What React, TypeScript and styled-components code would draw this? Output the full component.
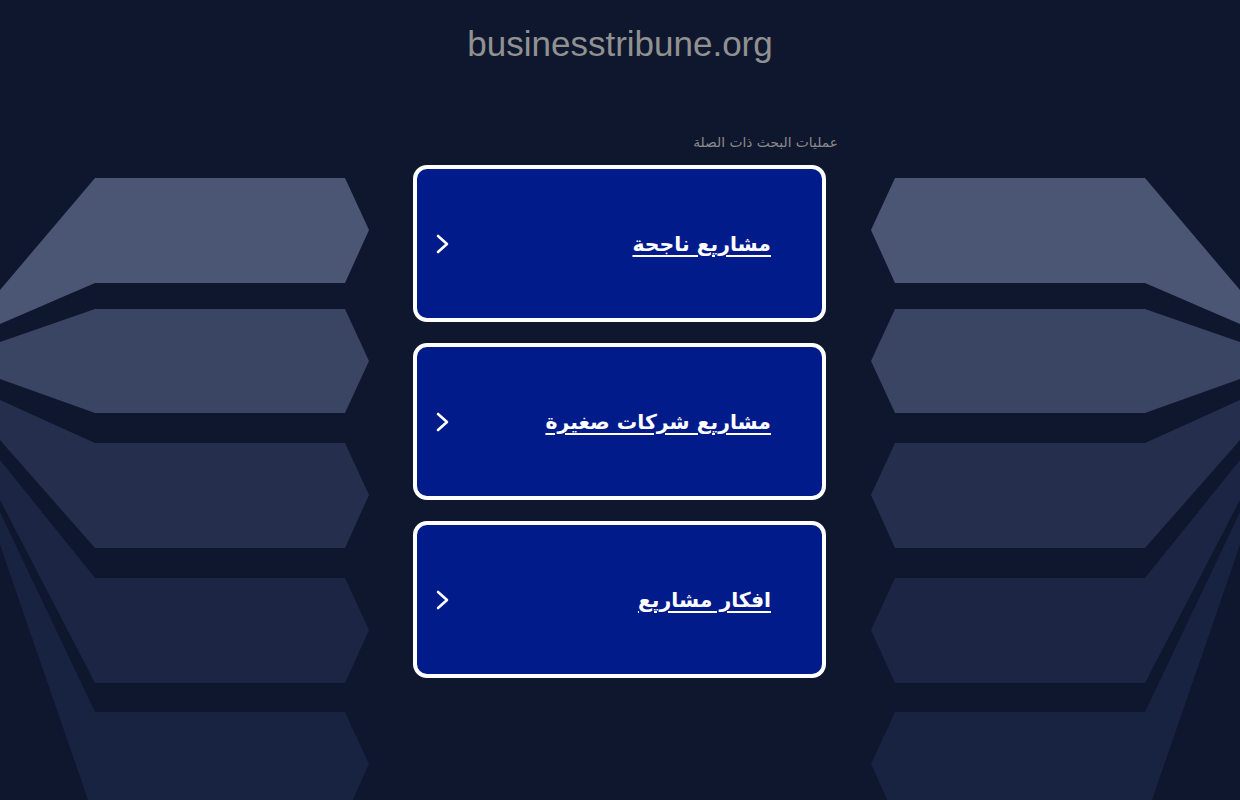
import styled, { createGlobalStyle } from 'styled-components';

const GlobalStyle = createGlobalStyle`
  html, body {
    margin: 0;
    padding: 0;
    background: #0f172e;
  }
`;

interface Shape {
  points: string;
  fill: string;
}

const shapes: Shape[] = [
  { points: '95,178 345,178 369,230 345,283 95,283 0,324 0,290', fill: '#4b5675' },
  { points: '95,309 345,309 369,361 345,413 95,413 0,379 0,342', fill: '#3a4463' },
  { points: '95,443 345,443 369,495 345,548 95,548 0,440 0,400', fill: '#252f4d' },
  { points: '95,578 345,578 369,630 345,683 95,683 0,500 0,460', fill: '#1c2644' },
  { points: '95,712 345,712 369,764 345,817 95,817 88,800 0,545 0,512', fill: '#182241' },
];

const links = ['مشاريع ناجحة', 'مشاريع شركات صغيرة', 'افكار مشاريع'];

const Page = styled.div`
  position: relative;
  min-height: 100vh;
  overflow: hidden;
  font-family: 'Liberation Sans', Arial, 'DejaVu Sans', sans-serif;
`;

const Backdrop = styled.svg`
  position: absolute;
  top: 0;
  left: 0;
  width: 100%;
  height: 800px;
  z-index: 0;
`;

const Content = styled.main`
  position: relative;
  z-index: 1;
  display: flex;
  flex-direction: column;
  align-items: center;
`;

const Title = styled.h1`
  margin: 24px 0 0;
  font-size: 35px;
  line-height: 40px;
  font-weight: 400;
  color: #919191;
`;

const Column = styled.section`
  width: 436px;
  margin-top: 70px;
  display: flex;
  flex-direction: column;
`;

const Label = styled.div`
  font-family: 'DejaVu Sans', sans-serif;
  font-size: 13.8px;
  line-height: 16px;
  color: #8a8a8a;
  text-align: right;
  direction: rtl;
`;

const CardList = styled.div`
  margin-top: 15px;
  padding-left: 11px;
  display: flex;
  flex-direction: column;
  align-items: flex-start;
  gap: 21px;
`;

const Card = styled.a`
  box-sizing: border-box;
  width: 413px;
  height: 157px;
  border: 4px solid #ffffff;
  border-radius: 14px;
  background: #021b8b;
  display: flex;
  align-items: center;
  justify-content: space-between;
  padding: 0 51px 0 19px;
  text-decoration: none;
  cursor: pointer;
`;

const LinkText = styled.span`
  font-family: 'DejaVu Sans', sans-serif;
  font-size: 20.4px;
  font-weight: 700;
  color: #ffffff;
  text-decoration: underline;
  text-underline-offset: 4px;
  direction: rtl;
`;

const Chevron = () => (
  <svg width="14" height="20" viewBox="0 0 14 20">
    <polyline
      points="2,2 11,10 2,18"
      fill="none"
      stroke="#ffffff"
      strokeWidth="2.6"
      strokeLinecap="round"
      strokeLinejoin="round"
    />
  </svg>
);

const App = () => {
  return (
    <Page>
      <GlobalStyle />
      <Backdrop viewBox="0 0 1240 800" preserveAspectRatio="none">
        <g>
          {shapes.map((s, i) => (
            <polygon key={i} points={s.points} fill={s.fill} />
          ))}
        </g>
        <g transform="translate(1240,0) scale(-1,1)">
          {shapes.map((s, i) => (
            <polygon key={i} points={s.points} fill={s.fill} />
          ))}
        </g>
      </Backdrop>
      <Content>
        <Title>businesstribune.org</Title>
        <Column>
          <Label>عمليات البحث ذات الصلة</Label>
          <CardList>
            {links.map(text => (
              <Card key={text}>
                <Chevron />
                <LinkText>{text}</LinkText>
              </Card>
            ))}
          </CardList>
        </Column>
      </Content>
    </Page>
  );
};

export default App;
